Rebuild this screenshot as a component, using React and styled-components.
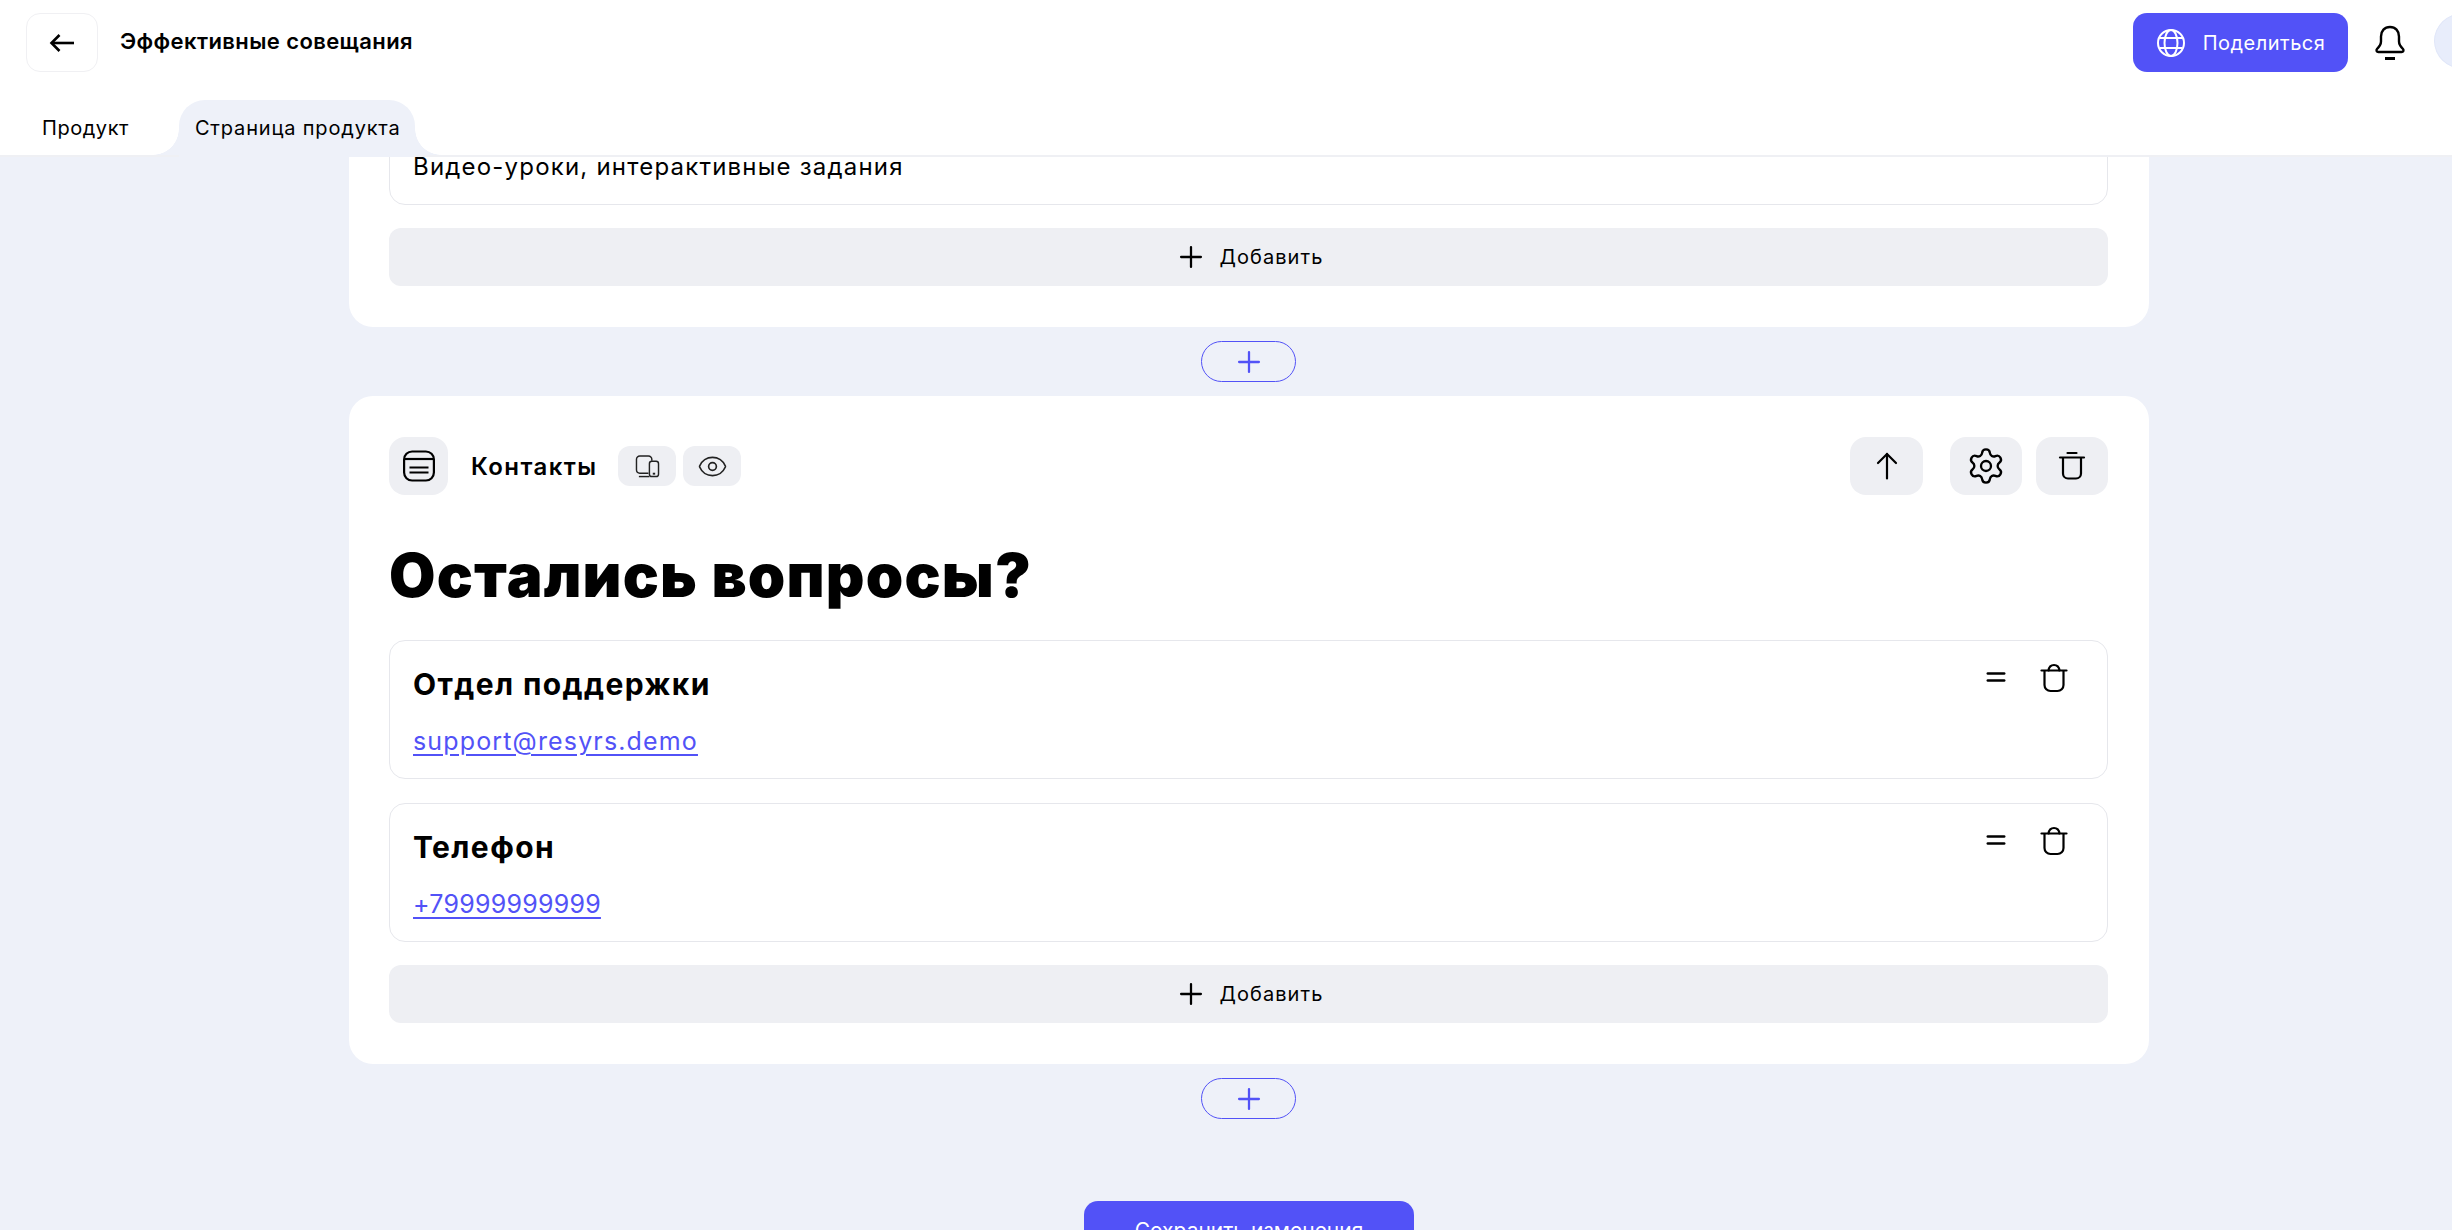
import React from 'react';
import styled, { createGlobalStyle } from 'styled-components';
import { Eye, Plus, Settings, Equal } from 'lucide-react';

const GlobalStyle = createGlobalStyle`
  html, body {
    margin: 0;
    padding: 0;
    height: 100%;
    overflow: hidden;
    background: #eef1f9;
  }
  body {
    font-family: "Inter", "Noto Sans", sans-serif;
    color: #000;
  }
`;

const Page = styled.div`
  width: 2452px;
  height: 1230px;
  display: flex;
  flex-direction: column;
  overflow: hidden;
`;

const Header = styled.header`
  flex: none;
  height: 155px;
  background: #fff;
  border-bottom: 2px solid #eff0f4;
  display: flex;
  flex-direction: column;
`;

const TopBar = styled.div`
  display: flex;
  align-items: center;
  justify-content: space-between;
  padding: 13px 0 0 26px;
`;

const TitleGroup = styled.div`
  display: flex;
  align-items: center;
  gap: 22px;
`;

const BackButton = styled.button`
  width: 72px;
  height: 59px;
  background: #fff;
  border: 1px solid #f0f0f3;
  border-radius: 14px;
  display: flex;
  align-items: center;
  justify-content: center;
  padding: 0;
`;

const ProductTitle = styled.div`
  font-size: 22px;
  font-weight: 600;
  letter-spacing: 0.4px;
  margin-top: -3px;
`;

const Actions = styled.div`
  display: flex;
  align-items: center;
  margin-right: -40px;
`;

const ShareButton = styled.button`
  width: 215px;
  height: 59px;
  background: #5252f7;
  color: #fff;
  border: none;
  border-radius: 14px;
  display: flex;
  align-items: center;
  justify-content: center;
  gap: 17px;
  font: inherit;
  font-size: 20px;
  letter-spacing: 0.5px;
  padding: 0;
`;

const BellWrap = styled.div`
  width: 32px;
  height: 36px;
  margin: 0 28px 0 26px;
  display: flex;
`;

const Avatar = styled.div`
  width: 58px;
  height: 56px;
  border-radius: 50%;
  background: #e8edfb;
  border: 1px solid #e0e6f8;
  box-sizing: border-box;
  margin-top: -4px;
`;

const Tabs = styled.nav`
  display: flex;
  margin-top: 28px;
  padding-left: 42px;
  flex: 1;
`;

const Tab = styled.div`
  position: relative;
  display: flex;
  align-items: center;
  box-sizing: border-box;
  font-size: 20px;
  letter-spacing: ${(p) => (p.$active ? 0.83 : 0.55)}px;
  height: 57px;
  padding: ${(p) => (p.$active ? '0 14px 2px 16px' : '0 0 2px')};
  margin-left: ${(p) => (p.$active ? '50px' : '0')};
  background: ${(p) => (p.$active ? '#eef1f9' : 'transparent')};
  border-radius: 26px 26px 0 0;

  ${(p) =>
    p.$active &&
    `
    &::before, &::after {
      content: '';
      position: absolute;
      bottom: 2px;
      width: 26px;
      height: 26px;
    }
    &::before {
      right: 100%;
      background: radial-gradient(circle at 0 0, #fff 25.5px, #eef1f9 26px);
    }
    &::after {
      left: 100%;
      background: radial-gradient(circle at 100% 0, #fff 25.5px, #eef1f9 26px);
    }
  `}
`;

const Main = styled.main`
  flex: 1;
  min-height: 0;
  overflow: hidden;
  padding-left: 46px;
  display: flex;
  flex-direction: column;
  align-items: center;
`;

const Card = styled.section`
  flex: none;
  width: 1800px;
  box-sizing: border-box;
  margin-top: ${(p) => p.$offset || 0}px;
  padding: 41px 41px 41px 40px;
  background: #fff;
  border-radius: 24px;
  display: flex;
  flex-direction: column;
  gap: 23px;
`;

const TextField = styled.div`
  height: 75px;
  box-sizing: border-box;
  border: 1px solid #e6e7ec;
  border-radius: 16px;
  padding: 0 23px 22px;
  display: flex;
  align-items: flex-end;
  font-size: 24px;
  letter-spacing: 1.2px;
  line-height: 30px;
`;

const AddButton = styled.button`
  height: 58px;
  width: 100%;
  background: #eeeff3;
  border: none;
  border-radius: 12px;
  display: flex;
  align-items: center;
  justify-content: center;
  gap: 12px;
  font: inherit;
  font-size: 20px;
  letter-spacing: 1.05px;
  color: #000;
  padding: 0;
`;

const AddBlock = styled.button`
  flex: none;
  width: 95px;
  height: 41px;
  margin: 14px 0 14px -1px;
  border: 1px solid #5252f7;
  border-radius: 21px;
  background: transparent;
  color: #5252f7;
  display: flex;
  align-items: center;
  justify-content: center;
  padding: 0;
`;

const BlockBar = styled.div`
  display: flex;
  align-items: center;
`;

const IconTile = styled.div`
  width: ${(p) => p.$w || 72}px;
  height: ${(p) => p.$h || 58}px;
  margin-right: ${(p) => p.$mr || 0}px;
  background: #eeeff3;
  border-radius: ${(p) => (p.$small ? 12 : 16)}px;
  display: flex;
  align-items: center;
  justify-content: center;
  flex: none;
`;

const BlockName = styled.div`
  font-size: 24px;
  font-weight: 600;
  letter-spacing: 1.4px;
  margin: 0 21px 0 23px;
`;

const Spacer = styled.div`
  flex: 1;
`;

const Heading = styled.h2`
  margin: 19px 0 4px;
  font-size: 60px;
  line-height: 76px;
  font-weight: 900;
  letter-spacing: 1.2px;
`;

const ContactList = styled.div`
  display: flex;
  flex-direction: column;
  gap: 24px;
`;

const ContactRow = styled.div`
  height: 139px;
  box-sizing: border-box;
  border: 1px solid #e6e7ec;
  border-radius: 16px;
  padding: 22px 39px 0 23px;
  display: flex;
  justify-content: space-between;
`;

const ContactTitle = styled.div`
  font-size: 30px;
  line-height: 42px;
  font-weight: 700;
  letter-spacing: 1.4px;
`;

const ContactLink = styled.a`
  display: block;
  margin-top: 16px;
  font-size: 25px;
  line-height: 40px;
  letter-spacing: ${(p) => (p.$digits ? 0.25 : 1.15)}px;
  color: #5252f7;
  text-decoration: underline;
  text-underline-offset: 4px;
`;

const RowIcons = styled.div`
  display: flex;
  align-items: flex-start;
  gap: 30px;
  padding-top: 0;
`;

const SaveButton = styled.button`
  flex: none;
  width: 330px;
  height: 59px;
  margin-top: 68px;
  background: #5252f7;
  color: #fff;
  border: none;
  border-radius: 14px;
  font: inherit;
  font-size: 21px;
  padding: 0;
`;

const BackArrowIcon = () => (
  <svg width="26" height="20" viewBox="0 0 26 20" fill="none" stroke="#000" strokeWidth="2.6">
    <path d="M25 10H3" />
    <path d="M10.500 2 2.500 10l8 8" />
  </svg>
);

const UpArrowIcon = () => (
  <svg width="22" height="28" viewBox="0 0 22 28" fill="none" stroke="#000" strokeWidth="2.2" strokeLinecap="round">
    <path d="M11 26.500V2" />
    <path d="M2 11 11 2l9 9" />
  </svg>
);

const BellIcon = () => (
  <svg width="32" height="36" viewBox="0 0 32 36" fill="none" stroke="#000" strokeWidth="2.4" strokeLinejoin="round">
    <path d="M16 2c-5.500 0-9 4-9 9.500v5c0 3-1.500 5-4 7.500-1 1.200-.4 3 1.400 3h23.200c1.800 0 2.400-1.800 1.400-3-2.500-2.500-4-4.500-4-7.500v-5C25 6 21.500 2 16 2Z" />
    <path d="M11 33.500h10" strokeWidth="3" />
  </svg>
);

const GlobeIcon = () => (
  <svg width="30" height="30" viewBox="0 0 30 30" fill="none" stroke="#fff" strokeWidth="2">
    <circle cx="15" cy="15" r="13" />
    <ellipse cx="15" cy="15" rx="6.500" ry="13" />
    <path d="M3.500 10h23M3.500 20h23" />
  </svg>
);

const BlockIcon = () => (
  <svg width="32" height="32" viewBox="0 0 32 32" fill="none" stroke="#000" strokeWidth="2.2">
    <rect x="1.100" y="1.500" width="29.800" height="29" rx="8" />
    <path d="M1.100 9h29.800" />
    <path d="M6.500 17.500h19M6.500 22.500h19" />
  </svg>
);

const DevicesIcon = () => (
  <svg width="25" height="23" viewBox="0 0 26 24" fill="none" stroke="#222" strokeWidth="1.500">
    <path d="M14 19H5a3.500 3.500 0 0 1-3.500-3.500v-11A3.500 3.500 0 0 1 5 1h9a3.500 3.500 0 0 1 3.500 3.500V6" />
    <path d="M4 22.500h11" />
    <rect x="15" y="6.500" width="9.500" height="16" rx="2.500" />
    <path d="M18.500 19.500h2.500" strokeWidth="2" />
  </svg>
);

const TrashIcon = () => (
  <svg width="28" height="30" viewBox="0 0 28 30" fill="none" stroke="#000" strokeWidth="2.2" strokeLinecap="round">
    <path d="M2 6.500h24" />
    <path d="M9.500 2h9" />
    <path d="M5 7v15.500a5 5 0 0 0 5 5h8a5 5 0 0 0 5-5V7" />
  </svg>
);

const RowTrashIcon = () => (
  <svg width="28" height="30" viewBox="0 0 28 30" fill="none" stroke="#000" strokeWidth="2.2" strokeLinecap="round">
    <path d="M1.500 7.500h25" />
    <path d="M8.500 7.500C9 4 11 2 14 2s5 2 5.500 5.500" />
    <path d="M4.500 8v14a6 6 0 0 0 6 6h7a6 6 0 0 0 6-6V8" />
  </svg>
);

const contacts = [
  { title: 'Отдел поддержки', link: 'support@resyrs.demo' },
  { title: 'Телефон', link: '+79999999999', digits: true },
];

const App = () => (
  <Page>
    <GlobalStyle />
    <Header>
      <TopBar>
        <TitleGroup>
          <BackButton>
            <BackArrowIcon />
          </BackButton>
          <ProductTitle>Эффективные совещания</ProductTitle>
        </TitleGroup>
        <Actions>
          <ShareButton>
            <GlobeIcon />
            Поделиться
          </ShareButton>
          <BellWrap>
            <BellIcon />
          </BellWrap>
          <Avatar />
        </Actions>
      </TopBar>
      <Tabs>
        <Tab>Продукт</Tab>
        <Tab $active>Страница продукта</Tab>
      </Tabs>
    </Header>
    <Main>
      <Card $offset={-68}>
        <TextField>Видео-уроки, интерактивные задания</TextField>
        <AddButton>
          <Plus size={34} strokeWidth={1.6} />
          Добавить
        </AddButton>
      </Card>
      <AddBlock>
        <Plus size={34} strokeWidth={1.6} />
      </AddBlock>
      <Card>
        <BlockBar>
          <IconTile $w={59}>
            <BlockIcon />
          </IconTile>
          <BlockName>Контакты</BlockName>
          <IconTile $small $w={58} $h={40} $mr={7}>
            <DevicesIcon />
          </IconTile>
          <IconTile $small $w={58} $h={40}>
            <Eye size={31} strokeWidth={1.3} color="#222" />
          </IconTile>
          <Spacer />
          <IconTile $w={73} $mr={27}>
            <UpArrowIcon />
          </IconTile>
          <IconTile $mr={14}>
            <Settings size={40} strokeWidth={1.4} />
          </IconTile>
          <IconTile>
            <TrashIcon />
          </IconTile>
        </BlockBar>
        <Heading>Остались вопросы?</Heading>
        <ContactList>
          {contacts.map((c) => (
            <ContactRow key={c.title}>
              <div>
                <ContactTitle>{c.title}</ContactTitle>
                <ContactLink href="#" $digits={c.digits}>{c.link}</ContactLink>
              </div>
              <RowIcons>
                <Equal size={28} strokeWidth={2.2} />
                <RowTrashIcon />
              </RowIcons>
            </ContactRow>
          ))}
        </ContactList>
        <AddButton>
          <Plus size={34} strokeWidth={1.6} />
          Добавить
        </AddButton>
      </Card>
      <AddBlock>
        <Plus size={34} strokeWidth={1.6} />
      </AddBlock>
      <SaveButton>Сохранить изменения</SaveButton>
    </Main>
  </Page>
);

export default App;
